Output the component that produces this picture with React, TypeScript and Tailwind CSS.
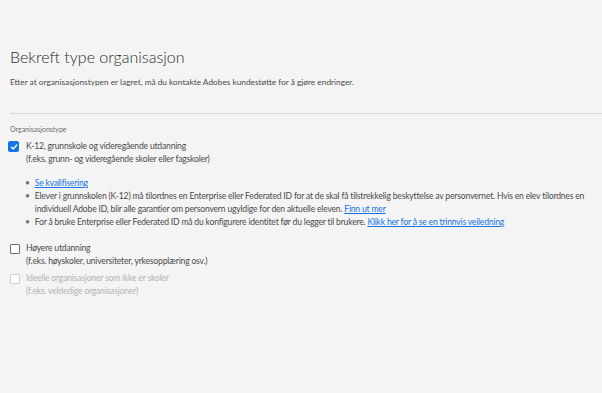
import React from "react";

const font = { fontFamily: "Lato, 'Open Sans', sans-serif" };

function Check({ checked, disabled }: { checked?: boolean; disabled?: boolean }) {
  if (checked) {
    return (
      <div className="w-[11px] h-[11px] rounded-[2px] bg-[#1473e6] flex items-center justify-center shrink-0">
        <svg width="8" height="8" viewBox="0 0 10 10">
          <path d="M1.8 5.2 L4 7.4 L8.4 2.6" fill="none" stroke="white" strokeWidth="1.8" strokeLinecap="round" strokeLinejoin="round" />
        </svg>
      </div>
    );
  }
  return (
    <div
      className={
        "w-[10px] h-[10px] rounded-[1px] border shrink-0 bg-white " +
        (disabled ? "border-[#d0d0d0]" : "border-[#6e6e6e]")
      }
    />
  );
}

export default function App() {
  return (
    <div className="w-[602px] h-[393px] bg-[#f4f4f4] overflow-hidden" style={font}>
      <div className="pl-[10px] pt-[46px]">
        <h1 className="text-[16px] leading-[22px] font-light text-[#2c2c2c]">Bekreft type organisasjon</h1>
        <p className="mt-[8px] text-[8.3px] leading-[12px] text-[#4b4b4b]">
          Etter at organisasjonstypen er lagret, må du kontakte Adobes kundestøtte for å gjøre endringer.
        </p>
        <div className="mt-[25px] h-px bg-[#d8d8d8]" />
        <div className="mt-[9px] text-[7px] leading-[12px] text-[#6e6e6e]">Organisasjonstype</div>
        <div className="mt-[5px] flex flex-col text-[8.6px] leading-[13px] tracking-[-0.2px] text-[#4b4b4b]">
          <div className="flex gap-[5px]">
            <div className="pt-[1px] -ml-[2px] mr-[2px]"><Check checked /></div>
            <div>
              <div>K-12, grunnskole og videregående utdanning</div>
              <div>(f.eks. grunn- og videregående skoler eller fagskoler)</div>
            </div>
          </div>
          <ul className="mt-[11px] pl-[15px] pr-[4px]">
            <li className="flex gap-[5px]">
              <span className="text-[#6e6e6e]">•</span>
              <span><a className="text-[#1473e6] underline">Se kvalifisering</a></span>
            </li>
            <li className="flex gap-[5px]">
              <span className="text-[#6e6e6e]">•</span>
              <span>
                Elever i grunnskolen (K-12) må tilordnes en Enterprise eller Federated ID for at de skal få tilstrekkelig beskyttelse av personvernet. Hvis en elev tilordnes en individuell Adobe ID, blir alle garantier om personvern ugyldige for den aktuelle eleven.{" "}
                <a className="text-[#1473e6] underline">Finn ut mer</a>
              </span>
            </li>
            <li className="flex gap-[5px]">
              <span className="text-[#6e6e6e]">•</span>
              <span>
                For å bruke Enterprise eller Federated ID må du konfigurere identitet før du legger til brukere.{" "}
                <a className="text-[#1473e6] underline">Klikk her for å se en trinnvis veiledning</a>
              </span>
            </li>
          </ul>
          <div className="mt-[13px] flex gap-[6px]">
            <div className="pt-[2px]"><Check /></div>
            <div>
              <div>Høyere utdanning</div>
              <div>(f.eks. høyskoler, universiteter, yrkesopplæring osv.)</div>
            </div>
          </div>
          <div className="mt-[4px] flex gap-[6px] text-[#b3b3b3]">
            <div className="pt-[2px]"><Check disabled /></div>
            <div>
              <div>Ideelle organisasjoner som ikke er skoler</div>
              <div>(f.eks. veldedige organisasjoner)</div>
            </div>
          </div>
        </div>
      </div>
    </div>
  );
}
